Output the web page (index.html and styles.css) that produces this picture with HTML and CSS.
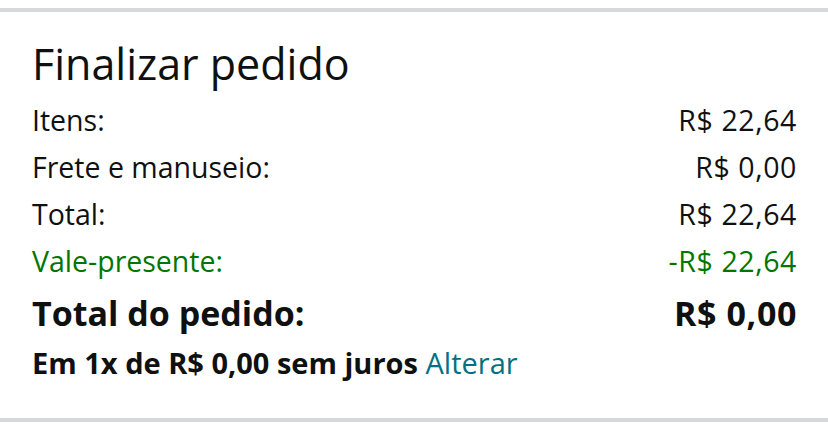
FILE: index.html
```html
<!DOCTYPE html>
<html lang="pt-BR">
<head>
  <meta charset="UTF-8">
  <meta name="viewport" content="width=device-width, initial-scale=1.0">
  <title>Finalizar pedido</title>
  <link rel="stylesheet" href="styles.css">
</head>
<body>
  <section class="summary">
    <h2 class="summary-title">Finalizar pedido</h2>

    <div class="row">
      <span>Itens:</span>
      <span class="value">R$ 22,64</span>
    </div>
    <div class="row">
      <span>Frete e manuseio:</span>
      <span class="value">R$ 0,00</span>
    </div>
    <div class="row">
      <span>Total:</span>
      <span class="value">R$ 22,64</span>
    </div>
    <div class="row row-gift">
      <span>Vale-presente:</span>
      <span class="value">-R$ 22,64</span>
    </div>

    <div class="row row-total">
      <span>Total do pedido:</span>
      <span class="value">R$ 0,00</span>
    </div>

    <p class="installments">Em 1x de R$ 0,00 sem juros <a href="#">Alterar</a></p>
  </section>
</body>
</html>
```

FILE: styles.css
```css
body {
  margin: 0;
  background: #fff;
  font-family: "Open Sans", Arial, sans-serif;
  color: #0f1111;
}
.summary {
  margin-top: 8px;
  border-top: 4px solid #d5d9d9;
  border-bottom: 4px solid #d5d9d9;
  padding: 24px 31px 38px 32px;
}
.summary-title {
  margin: 0 0 5px;
  font-size: 43px;
  line-height: 56px;
  font-weight: 400;
}
.row {
  display: flex;
  justify-content: space-between;
  font-size: 28.5px;
  line-height: 47px;
}
.value {
  letter-spacing: 0.6px;
}
.row-gift {
  color: #007600;
}
.row-total {
  margin-top: 6px;
  font-size: 34px;
  line-height: 44px;
  font-weight: 700;
}
.installments {
  margin: 11px 0 0;
  font-size: 29px;
  line-height: 34px;
  font-weight: 700;
}
.installments a {
  color: #007185;
  font-weight: 400;
  text-decoration: none;
}
```
